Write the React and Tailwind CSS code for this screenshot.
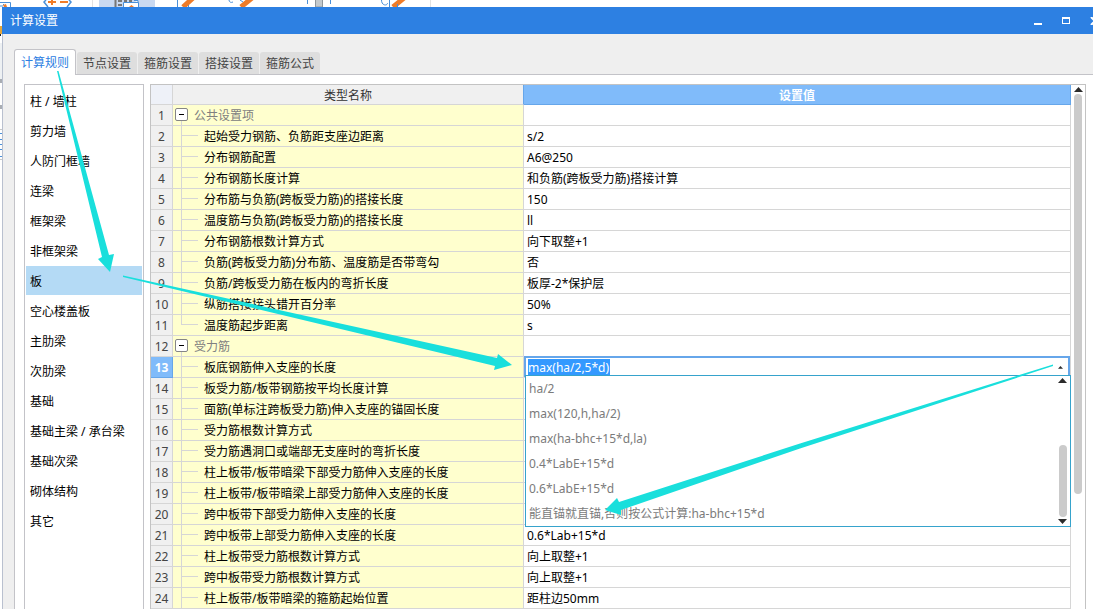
import React, { useState } from "react";

const tabs = ["计算规则", "节点设置", "箍筋设置", "搭接设置", "箍筋公式"];

const categories = [
  "柱 / 墙柱", "剪力墙", "人防门框墙", "连梁", "框架梁", "非框架梁", "板", "空心楼盖板",
  "主肋梁", "次肋梁", "基础", "基础主梁 / 承台梁", "基础次梁", "砌体结构", "其它",
];

const rows = [
  { name: "公共设置项", group: true },
  { name: "起始受力钢筋、负筋距支座边距离", value: "s/2" },
  { name: "分布钢筋配置", value: "A6@250" },
  { name: "分布钢筋长度计算", value: "和负筋(跨板受力筋)搭接计算" },
  { name: "分布筋与负筋(跨板受力筋)的搭接长度", value: "150" },
  { name: "温度筋与负筋(跨板受力筋)的搭接长度", value: "ll" },
  { name: "分布钢筋根数计算方式", value: "向下取整+1" },
  { name: "负筋(跨板受力筋)分布筋、温度筋是否带弯勾", value: "否" },
  { name: "负筋/跨板受力筋在板内的弯折长度", value: "板厚-2*保护层" },
  { name: "纵筋搭接接头错开百分率", value: "50%" },
  { name: "温度筋起步距离", value: "s", last: true },
  { name: "受力筋", group: true },
  { name: "板底钢筋伸入支座的长度", value: "max(ha/2,5*d)", editing: true },
  { name: "板受力筋/板带钢筋按平均长度计算" },
  { name: "面筋(单标注跨板受力筋)伸入支座的锚固长度" },
  { name: "受力筋根数计算方式" },
  { name: "受力筋遇洞口或端部无支座时的弯折长度" },
  { name: "柱上板带/板带暗梁下部受力筋伸入支座的长度" },
  { name: "柱上板带/板带暗梁上部受力筋伸入支座的长度" },
  { name: "跨中板带下部受力筋伸入支座的长度" },
  { name: "跨中板带上部受力筋伸入支座的长度", value: "0.6*Lab+15*d" },
  { name: "柱上板带受力筋根数计算方式", value: "向上取整+1" },
  { name: "跨中板带受力筋根数计算方式", value: "向上取整+1" },
  { name: "柱上板带/板带暗梁的箍筋起始位置", value: "距柱边50mm" },
];

const options = [
  "ha/2",
  "max(120,h,ha/2)",
  "max(ha-bhc+15*d,la)",
  "0.4*LabE+15*d",
  "0.6*LabE+15*d",
  "能直锚就直锚,否则按公式计算:ha-bhc+15*d",
];

const Triangle = ({ down, className = "w-[9px]" }) => (
  <svg viewBox="0 0 9 5" className={className} fill="#2b2b2b" aria-hidden="true">
    <path d={down ? "M0 0h9L4.500 5z" : "M0 5h9L4.500 0z"} />
  </svg>
);

// Part of the host application's ribbon that shows above the dialog
const RibbonEdge = () => (
  <svg className="block h-[7px] w-[440px] shrink-0" viewBox="0 0 440 7" fill="none" aria-hidden="true">
    <path d="M99 0h56v7H99z" fill="#c9d9f1" />
    <path d="M0 2.500h10.500V7M3 4l3 3M0 6h3" stroke="#4a90d9" />
    <path d="M3 5l3-1 1 3H4z" fill="#f07c28" />
    <path d="M46 0l-2 2 4 5M69 0l2 2-4 5" stroke="#4a90d9" strokeWidth="1.500" />
    <path d="M48 2h8M52 0v5M60 2h8" stroke="#f07c28" strokeWidth="2" />
    <path d="M92.500 0v7M430.500 0v7" stroke="#e2e2e2" />
    <path d="M115.500 0v7M118 1h4M124 1h3M129 1h3M118 5h4" stroke="#777" strokeWidth="2" />
    <path d="M123.500 7V2.500h15V7M134 .5h4v2" stroke="#4a90d9" fill="#fff" />
    <path d="M129 7l2.500-2 2.500 2z" fill="#f07c28" />
    <path d="M177.500 0v7M188.500 4v3" stroke="#4a90d9" />
    <path d="M193 -2l-10 9M252 -2l-11 9M404 -2l-11 9" stroke="#f07c28" strokeWidth="5" />
    <path d="M229 0c0 2 2 3 4 2M240 0l3 2M307.500 0v4M330.500 0v4M381.500 0c0 6 6 6 6 3M389.500 0v7M397.500 4v3" stroke="#4a90d9" />
    <path d="M315.500 0v7h7V0" fill="#c3c9cd" stroke="#8f979c" />
  </svg>
);

// Sliver of the host window left of the dialog
const HostEdge = () => (
  <svg className="block h-full w-[2px] shrink-0" viewBox="0 0 2 602" preserveAspectRatio="xMidYMin slice" aria-hidden="true">
    <path d="M0 19h2v8H0z" fill="#e3a63b" />
    <path d="M0 27h1v2H0z" fill="#222" />
    <path d="M0 36h2v36H0z" fill="#eef1f3" />
    <path d="M0 72h2v4H0zM0 98h2v4H0z" fill="#a9adb3" />
    <path d="M0 122h2v1H0zM0 152h2v1H0z" fill="#c8c8c8" />
    <path d="M0 126h2v1H0zM0 132h2v1H0zM0 137h2v1H0zM0 142h2v1H0zM0 149h2v1H0z" fill="#4a90d9" />
  </svg>
);

const TitleBar = () => (
  <header className="flex h-[27px] shrink-0 items-center justify-between bg-[#2d80e2] pl-2 text-white">
    <h1>计算设置</h1>
    <div className="-mr-2 flex shrink-0 items-center gap-5">
      <button aria-label="最小化" className="flex h-[8px] w-[8px] items-end"><span className="h-[2px] w-full bg-white" /></button>
      <button aria-label="最大化" className="h-[7px] w-[8px] border border-t-2 border-white" />
      <button aria-label="关闭" className="h-[8px] w-[11px]">
        <svg viewBox="0 0 11 8" className="block" stroke="#fff" strokeWidth="2" aria-hidden="true"><path d="M1 0l8 8M9 0L1 8" /></svg>
      </button>
    </div>
  </header>
);

const ValueEditor = ({ value, onChange }) => (
  <div className="relative h-[20px]">
    <div className="absolute inset-x-0 -top-px z-10 flex h-[21px] items-center border-2 border-b-0 border-[#66a6ea] bg-white pr-[5px] pl-[2px]">
      <input
        aria-label="板底钢筋伸入支座的长度"
        value={value}
        onChange={(e) => onChange(e.target.value)}
        size={10}
        className="h-[17px] w-[82px] bg-[#3399ff] text-white outline-none"
      />
      <button aria-label="收起" className="ml-auto flex"><Triangle className="w-[5px]" /></button>
    </div>
    <div className="absolute -right-px left-px top-[18px] z-20 flex border border-[#36a3cc] bg-white">
      <ul role="listbox" aria-label="可选公式" className="min-w-0 flex-1">
        {options.map((option) => (
          <li key={option} role="option" aria-selected={option === value} onClick={() => onChange(option)} className="h-[25px] pl-[3px] leading-[25px] text-[#7b7b7b]">
            {option}
          </li>
        ))}
      </ul>
      <div className="flex w-[15px] flex-col items-center justify-between py-[2px]">
        <Triangle />
        <div className="mt-auto mb-[2px] h-[72px] w-[8px] rounded-full bg-[#cbcbcb]" />
        <Triangle down />
      </div>
    </div>
  </div>
);

const NameCell = ({ row }) => {
  if (row.group) {
    return (
      <div className="flex h-[20px] pl-[2px]">
        <div className="flex w-[13px] flex-col items-center">
          <button aria-label={`折叠${row.name}`} className="mt-[3px] flex h-[13px] w-[13px] items-center justify-center rounded-[2px] border border-[#858585] bg-white">
            <span className="h-px w-[5px] bg-black" />
          </button>
          <span className="w-px flex-1 bg-[#d6d6d6]" />
        </div>
        <span className="pl-[6px] leading-[22px] text-[#808080]">{row.name}</span>
      </div>
    );
  }
  return (
    <div className="flex h-[20px] pl-2">
      <span className={row.last ? "h-[10px] w-px bg-[#d6d6d6]" : "h-[20px] w-px bg-[#d6d6d6]"} />
      <span className="mt-[9px] h-px w-[16px] bg-[#d6d6d6]" />
      <span className="pl-[6px] leading-[22px]">{row.name}</span>
    </div>
  );
};

// Annotation arrows drawn over the dialog
const Arrows = () => (
  <svg className="pointer-events-none absolute left-0 top-0 z-30" width="1093" height="609" fill="#19dfdc" aria-hidden="true">
    <path d="M57 71L58.500 71L109 255L114 254L110 272L98 259L102 257z" />
    <path d="M123 275.500L497 358L498 354L512 365L494 370L495 366L123 277z" />
    <path d="M1053 364.500L1053 366L800 448.500L621 510L621 515L605 510L617 498L619 502L800 443.500z" />
  </svg>
);

const App = () => {
  const [activeTab, setActiveTab] = useState(tabs[0]);
  const [category, setCategory] = useState("板");
  const [formula, setFormula] = useState("max(ha/2,5*d)");

  return (
    <div className="relative flex h-screen flex-col overflow-hidden bg-white font-['Noto_Sans','Noto_Sans_CJK_SC',sans-serif] text-[12px] text-black">
      <RibbonEdge />
      <div className="flex min-h-0 flex-1">
        <HostEdge />
        <div className="flex min-w-0 flex-1 flex-col">
          <TitleBar />
          <main className="flex min-h-0 flex-1 flex-col border-l border-[#b9c0cf] bg-[#efefef] pt-[15px] pl-[11px]">
            <div role="tablist" className="flex items-end gap-px">
              {tabs.map((tab) => (
                <button
                  key={tab}
                  role="tab"
                  aria-selected={activeTab === tab}
                  onClick={() => setActiveTab(tab)}
                  className={
                    activeTab === tab
                      ? "relative z-10 -mb-px h-[26px] w-[62px] rounded-t-[3px] border border-b-0 border-[#c3c3c8] bg-white pl-[6px] text-left text-[#2d80e2]"
                      : "h-[22px] w-[60px] rounded-t-[3px] bg-[#dedede] pt-[2px] pl-[6px] text-left text-[#444]"
                  }
                >
                  {tab}
                </button>
              ))}
            </div>
            <div className="flex min-h-0 flex-1 gap-[6px] border-l border-t border-[#c3c3c8] bg-white pt-[9px] pr-[7px] pl-[9px]">
              <ul className="w-[120px] shrink-0 border border-b-0 border-[#c3c3c8] p-px">
                {categories.map((item) => (
                  <li key={item} className="h-[30px]">
                    <button
                      onClick={() => setCategory(item)}
                      className={`h-[29px] w-full pt-[2px] pl-1 text-left ${category === item ? "bg-[#b4daf5]" : ""}`}
                    >
                      {item}
                    </button>
                  </li>
                ))}
              </ul>
              <div className="flex min-w-0 flex-1 items-stretch border border-b-0 border-[#c3c3c3]">
                <table className="h-fit min-w-0 flex-1 table-fixed border-separate border-spacing-0">
                  <colgroup>
                    <col className="w-[22px]" />
                    <col className="w-[351px]" />
                    <col />
                  </colgroup>
                  <thead>
                    <tr className="h-[20px]">
                      <th aria-label="行号" className="border-r border-b border-[#d6d6d6] bg-[#eef1f8] p-0" />
                      <th className="border-r border-b border-r-[#66a6ea] border-b-[#d6d6d6] bg-[#f0f0f0] p-0 font-normal text-[#333]">
                        <div className="h-[19px] leading-[21px]">类型名称</div>
                      </th>
                      <th className="border-r border-b border-[#66a6ea] bg-[#80bbfa] p-0 font-bold text-white">
                        <div className="h-[19px] leading-[21px]">设置值</div>
                      </th>
                    </tr>
                  </thead>
                  <tbody>
                    {rows.map((row, i) => (
                      <tr key={i} className="h-[21px]">
                        <th
                          scope="row"
                          className={
                            row.editing
                              ? "border-r border-b border-[#66a6ea] bg-[#80bbfa] p-0 font-bold text-white"
                              : "border-r border-b border-[#d6d6d6] bg-[#f0f0f0] p-0 font-normal text-[#444]"
                          }
                        >
                          <div className="h-[20px] leading-[22px]">{i + 1}</div>
                        </th>
                        <td className="border-r border-b border-[#d6d6d6] bg-[#ffffce] p-0">
                          <NameCell row={row} />
                        </td>
                        <td className="border-r border-b border-[#d6d6d6] p-0">
                          {row.editing ? (
                            <ValueEditor value={formula} onChange={setFormula} />
                          ) : (
                            <div className="h-[20px] pl-[3px] leading-[22px]">{row.value}</div>
                          )}
                        </td>
                      </tr>
                    ))}
                  </tbody>
                </table>
                <div className="flex w-[14px] flex-col items-center pt-[2px]">
                  <Triangle />
                  <div className="mt-[2px] h-[400px] w-[8px] rounded-full bg-[#cbcbcb]" />
                </div>
              </div>
            </div>
          </main>
        </div>
      </div>
      <Arrows />
    </div>
  );
};

export default App;
